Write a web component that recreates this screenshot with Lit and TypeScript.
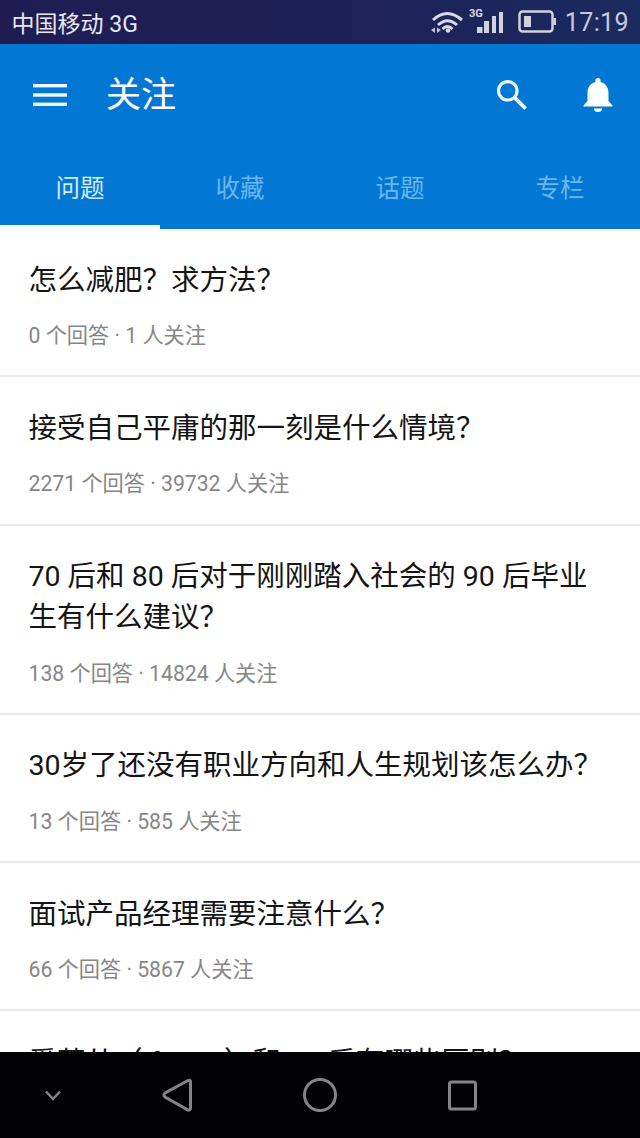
import { LitElement, html, css } from "lit";
import { customElement } from "lit/decorators.js";

const items = [
  { t: ["怎么减肥？求方法？"], m: "0 个回答 · 1 人关注" },
  { t: ["接受自己平庸的那一刻是什么情境？"], m: "2271 个回答 · 39732 人关注" },
  { t: ["70 后和 80 后对于刚刚踏入社会的 90 后毕业", "生有什么建议？"], m: "138 个回答 · 14824 人关注" },
  { t: ["30岁了还没有职业方向和人生规划该怎么办？"], m: "13 个回答 · 585 人关注" },
  { t: ["面试产品经理需要注意什么？"], m: "66 个回答 · 5867 人关注" },
  { t: ["爱莫从（iframe）和 90 后有哪些区别？"], m: "" },
];

@customElement("app-root")
export class AppRoot extends LitElement {
  static styles = css`
    :host {
      display: block;
      width: 640px;
      height: 1138px;
      overflow: hidden;
      position: relative;
      background: #fff;
      font-family: "Roboto", "Noto Sans CJK SC", sans-serif;
    }
    .status {
      height: 44px;
      background: linear-gradient(90deg, #201c52, #1d2258 60%, #1b2b60);
      color: #e8e8f0;
      display: flex;
      align-items: center;
      padding: 0 11px 0 11.5px;
      font-size: 23px;
    }
    .carrier { flex: 1; }
    .status svg { display: block; }
    .batt { margin-left: 14px; }
    .time { font-size: 25px; margin-left: 9px; color: #c9cbd8; letter-spacing: 0.4px; }
    .bar { background: #0277d4; height: 185px; display: flex; flex-direction: column; }
    .toolbar {
      height: 102px;
      display: flex;
      align-items: center;
      padding: 0 27px 0 33px;
      color: #fff;
    }
    .title { font-size: 35px; margin-left: 39px; flex: 1; line-height: 1; }
    .bell { margin-left: 55px; }
    .tabs { display: flex; flex: 1; }
    .tab {
      flex: 1;
      display: flex;
      align-items: center;
      justify-content: center;
      font-size: 24.5px;
      color: #6cb6ec;
      box-sizing: border-box;
      padding-top: 1px;
      border-bottom: 4px solid transparent;
    }
    .tab.on { color: #d5ecfb; border-bottom-color: #fff; }
    .item {
      padding: 30.7px 28.5px 0;
      border-bottom: 2px solid #e9e9e9;
      height: 148.3px;
      box-sizing: border-box;
    }
    .item.two { height: 189px; }
    .q { font-size: 28.5px; line-height: 41px; color: #141414; white-space: nowrap; }
    .m { font-size: 21.2px; line-height: 30px; color: #868686; margin-top: 20.3px; white-space: nowrap; }
    .nav {
      position: absolute;
      left: 0; right: 0; bottom: 0;
      height: 86px;
      background: #020104;
    }
    .nav svg { display: block; }
  `;

  render() {
    return html`
      <div class="status">
        <span class="carrier">中国移动 3G</span>
        <svg width="74" height="36" viewBox="0 0 74 36" fill="none">
          <path d="M3 16 Q17 3 32 16" stroke="#d8dae4" stroke-width="3" />
          <path d="M8 21 Q17.500 12.500 27 21" stroke="#d8dae4" stroke-width="3" />
          <path d="M12.500 25 Q17.500 20 22.500 25" stroke="#d8dae4" stroke-width="3" />
          <circle cx="18" cy="26.500" r="2.300" fill="#d8dae4" />
          <path d="M5 23.500 L1 26 L5 29Z M7 23.500 L11 26 L7 29Z" fill="#c5c8d4" />
          <text x="39" y="13" font-size="11" font-weight="700" fill="#d8dae4" font-family="Roboto, sans-serif">3G</text>
          <rect x="47" y="23" width="5.500" height="6" fill="#d0d2de" />
          <rect x="54" y="17" width="5" height="12" fill="#d0d2de" />
          <rect x="62" y="12" width="4" height="17" fill="#d0d2de" />
          <rect x="69" y="8" width="4" height="21" fill="#d0d2de" />
        </svg>
        <svg class="batt" width="38" height="24" viewBox="0 0 38 24" fill="none">
          <rect x="1.500" y="1.500" width="33" height="20" rx="3" stroke="#d0d2de" stroke-width="2.500" />
          <rect x="6" y="6" width="7" height="11" fill="#d0d2de" />
          <rect x="35.500" y="8" width="2.500" height="7" fill="#d0d2de" />
        </svg>
        <span class="time">17:19</span>
      </div>
      <div class="bar">
        <div class="toolbar">
          <svg width="34" height="22" viewBox="0 0 34 22" fill="#f2f9fe">
            <rect y="0" width="34" height="3.400" />
            <rect y="9.300" width="34" height="3.400" />
            <rect y="18.600" width="34" height="3.400" />
          </svg>
          <span class="title">关注</span>
          <svg width="32" height="32" viewBox="0 0 34 34" fill="none" stroke="#eef8fe" stroke-width="3.400">
            <circle cx="12.500" cy="12.500" r="9.800" />
            <path d="M19.500 19.500 L31.500 31.500" stroke-width="4" />
          </svg>
          <svg class="bell" width="30" height="36" viewBox="0 0 30 36" fill="#fbfeff">
            <path d="M15 1 a2.600 2.600 0 0 1 2.600 2.600 v1.500 C23 6.500 25.500 11 25.500 16 v8 l4 4.500 v1 H0.500 v-1 l4 -4.500 v-8 C4.500 11 7 6.500 12.400 5.100 V3.600 A2.600 2.600 0 0 1 15 1Z" />
            <path d="M11 31.500 h8 a4 3.500 0 0 1 -8 0Z" />
          </svg>
        </div>
        <div class="tabs">
          <div class="tab on">问题</div>
          <div class="tab">收藏</div>
          <div class="tab">话题</div>
          <div class="tab">专栏</div>
        </div>
      </div>
      ${items.map(
        (i) => html`<div class="item ${i.t.length > 1 ? "two" : ""}">
          ${i.t.map((l) => html`<div class="q">${l}</div>`)}
          <div class="m">${i.m}</div>
        </div>`
      )}
      <div class="nav">
        <svg width="640" height="86" viewBox="0 0 640 86" fill="none" stroke="#858585" stroke-width="3">
          <path d="M46 39.500 L53 47 L60 39.500" stroke-width="2.500" />
          <path d="M188 28.500 L165 41 Q163 43 165 45 L188 58 Q190.500 58.500 190.500 56 V30 Q190.500 27.500 188 28.500Z" />
          <circle cx="320" cy="43" r="15.500" />
          <rect x="449.500" y="30" width="26" height="27" rx="2" />
        </svg>
      </div>
    `;
  }
}
